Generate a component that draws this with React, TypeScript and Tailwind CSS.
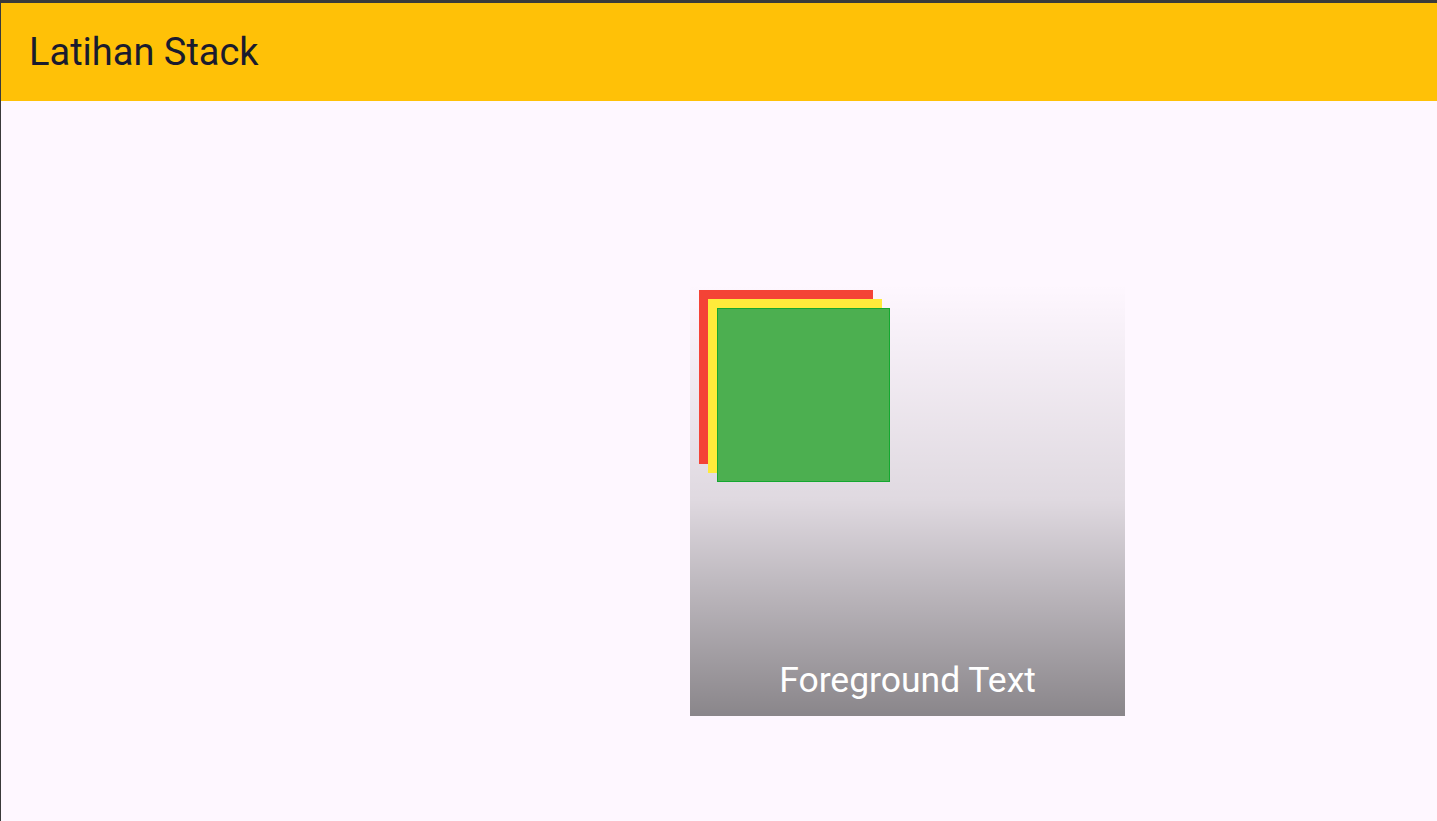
export default function App() {
  return (
    <div className="min-h-screen w-full bg-[#3a3a3a] pt-[3px] pl-[1px] font-['Roboto','Liberation_Sans',sans-serif]">
      <div className="flex h-[818px] flex-col bg-[#fef7ff]">
        <header className="flex h-[98px] shrink-0 items-center bg-[#ffc107] pl-[28px]">
          <h1 className="text-[38px] leading-none text-[#1a1b2e]">Latihan Stack</h1>
        </header>
        <main className="flex-1 pt-[182px] pl-[689px]">
          <div className="relative h-[433px] w-[435px] bg-[linear-gradient(to_bottom,rgba(0,0,0,0)_0%,rgba(0,0,0,0.12)_50%,rgba(0,0,0,0.46)_100%)]">
            <div className="absolute left-[9px] top-[7px] h-[174px] w-[174px] bg-[#f44336]" />
            <div className="absolute left-[18px] top-[16px] h-[174px] w-[174px] bg-[#ffeb3b]" />
            <div className="absolute left-[27px] top-[25px] h-[174px] w-[173px] border border-[#14a830] bg-[#4caf50]" />
            <div className="absolute inset-x-0 bottom-[18px] text-center text-[35.5px] leading-none text-white">
              Foreground Text
            </div>
          </div>
        </main>
      </div>
    </div>
  );
}
